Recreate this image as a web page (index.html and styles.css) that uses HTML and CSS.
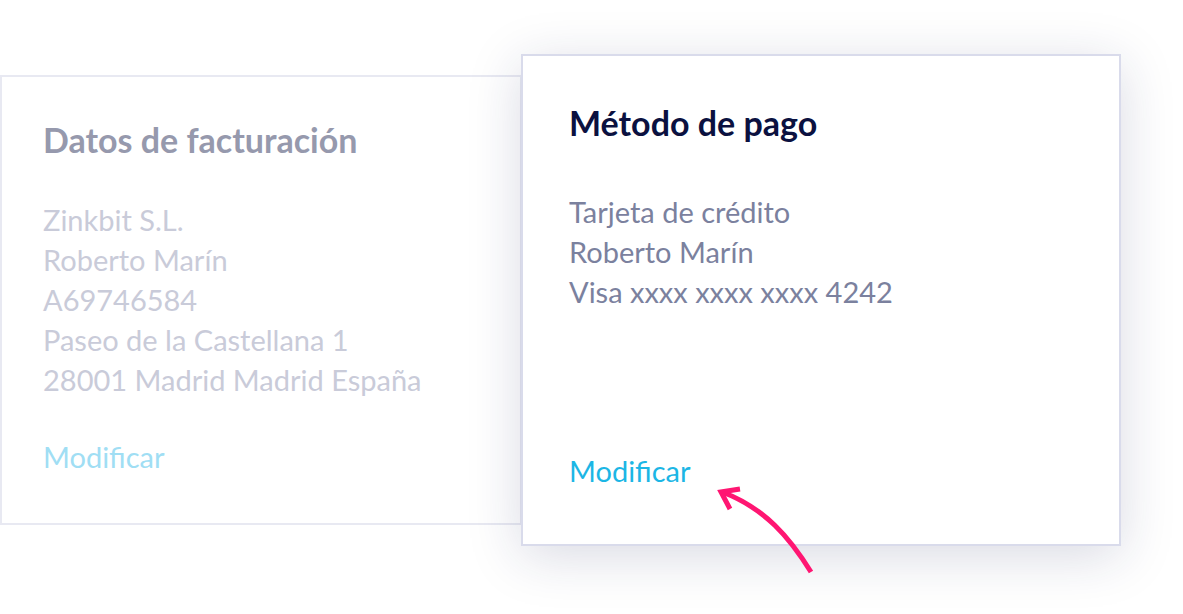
FILE: index.html
```html
<!DOCTYPE html>
<html lang="es">
<head>
<meta charset="utf-8">
<title>Facturación</title>
<link rel="stylesheet" href="styles.css">
</head>
<body>
<main class="stage">
  <section class="card card--muted">
    <h2 class="card__title">Datos de facturación</h2>
    <div class="card__body">
      <div>Zinkbit S.L.</div>
      <div>Roberto Marín</div>
      <div>A69746584</div>
      <div>Paseo de la Castellana 1</div>
      <div>28001 Madrid Madrid España</div>
    </div>
    <a class="card__link" href="#">Modificar</a>
  </section>
  <section class="card card--active">
    <h2 class="card__title">Método de pago</h2>
    <div class="card__body">
      <div>Tarjeta de crédito</div>
      <div>Roberto Marín</div>
      <div>Visa xxxx xxxx xxxx 4242</div>
    </div>
    <a class="card__link" href="#">Modificar</a>
  </section>
  <svg class="arrow" width="140" height="120" viewBox="700 470 140 120" aria-hidden="true">
    <path d="M811 572 C790 538 765 508 722 492" fill="none" stroke="#ff1672" stroke-width="5"/>
    <path d="M740 489 L721 492 L730 509" fill="none" stroke="#ff1672" stroke-width="5" stroke-linejoin="miter"/>
  </svg>
</main>
</body>
</html>
```
FILE: styles.css
```css
html, body {
  margin: 0;
  padding: 0;
  background: #ffffff;
}

body {
  font-family: Lato, "Liberation Sans", sans-serif;
  width: 1183px;
  height: 614px;
  overflow: hidden;
}

.stage {
  position: relative;
  display: flex;
  align-items: flex-start;
  padding-top: 54px;
  height: 560px;
}

.card {
  box-sizing: border-box;
  display: flex;
  flex-direction: column;
  background: #ffffff;
}

.card__title {
  margin: 0;
  font-size: 34px;
  line-height: 40px;
  font-weight: 700;
}

.card__body {
  font-size: 29px;
  line-height: 40px;
}

.card__link {
  margin-top: auto;
  font-size: 29px;
  line-height: 40px;
  text-decoration: none;
}

.card--muted {
  margin-top: 21px;
  width: 522px;
  height: 450px;
  border: 2px solid #e8e9f2;
  padding: 43px 0 46px 41px;
}

.card--muted .card__title { color: #9699ad; }
.card--muted .card__body { margin-top: 40px; color: #c9cbd9; }
.card--muted .card__link { color: #a0def4; }

.card--active {
  position: relative;
  z-index: 1;
  margin-left: -1px;
  width: 600px;
  height: 492px;
  border: 2px solid #d9dbeb;
  padding: 47px 0 53px 46px;
  box-shadow: 0 10px 50px rgba(30, 35, 90, 0.17);
}

.card--active .card__title { color: #0b1140; }
.card--active .card__body { margin-top: 49px; color: #7b819e; }
.card--active .card__link { color: #1cb6e5; }

.arrow {
  position: absolute;
  left: 700px;
  top: 470px;
  z-index: 2;
}
```
